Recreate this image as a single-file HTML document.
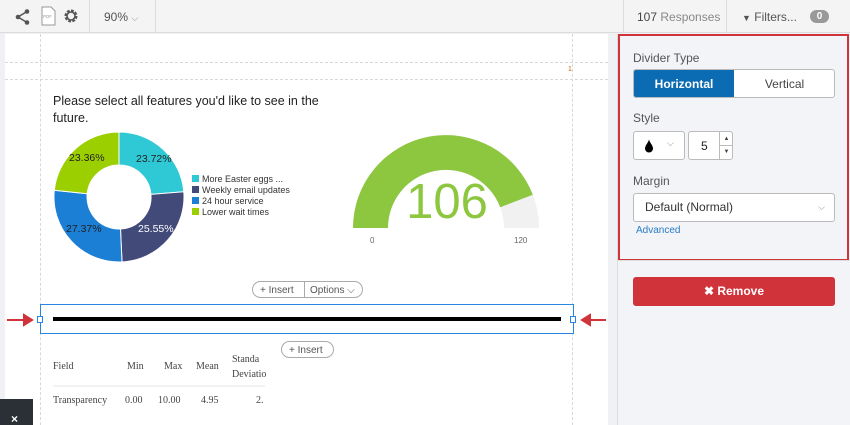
<!DOCTYPE html>
<html><head><meta charset="utf-8"><style>
*{box-sizing:border-box;margin:0;padding:0}
body{width:850px;height:425px;overflow:hidden;background:#f0f1f4;font-family:"Liberation Sans",sans-serif;position:relative}
.top{position:absolute;left:0;top:0;width:850px;height:33px;background:#f4f4f4;border-bottom:1px solid #dcdcdc}
.sep{position:absolute;top:0;width:1px;height:33px;background:#dcdcdc}
.canvas{position:absolute;left:5px;top:34px;width:603px;height:391px;background:#fff}
.dv{position:absolute;width:0;border-left:1px dashed #d8d8d8}
.dh{position:absolute;height:0;border-top:1px dashed #d8d8d8}
.panel{position:absolute;left:617px;top:34px;width:233px;height:391px;background:#f2f4f8;border-left:1px solid #dcdcdc}
.abs{position:absolute}
</style></head><body>
<div class="top">
  <svg class="abs" style="left:14px;top:8px" width="18" height="18" viewBox="0 0 18 18"><circle cx="13" cy="3.5" r="2.3" fill="#555"/><circle cx="4" cy="9" r="2.3" fill="#555"/><circle cx="13" cy="14.5" r="2.3" fill="#555"/><path d="M13 3.5L4 9L13 14.5" stroke="#555" stroke-width="1.5" fill="none"/></svg>
  <svg class="abs" style="left:41px;top:6px" width="15" height="20" viewBox="0 0 15 20"><path d="M1 1H10L14 5V19H1Z" fill="#fff" stroke="#999"/><text x="2" y="12" font-size="4.5" fill="#999" font-family="Liberation Sans">PDF</text></svg>
  <svg class="abs" style="left:63px;top:8px" width="16" height="16" viewBox="0 0 16 16"><circle cx="8" cy="8" r="5" fill="none" stroke="#555" stroke-width="3" stroke-dasharray="2.6 1.3"/><circle cx="8" cy="8" r="4" fill="none" stroke="#555" stroke-width="1.6"/></svg>
  <div class="sep" style="left:89px"></div>
  <div class="abs" style="left:104px;top:10px;font-size:12px;color:#555">90% <span style="font-size:9px;color:#888">⌵</span></div>
  <div class="sep" style="left:155px"></div>
  <div class="sep" style="left:623px"></div>
  <div class="abs" style="left:637px;top:10px;font-size:12px;color:#888"><span style="color:#444">107</span> Responses</div>
  <div class="sep" style="left:726px"></div>
  <div class="abs" style="left:742px;top:10px;font-size:12px;color:#555"><span style="font-size:9px">▼</span> Filters...</div>
  <div class="abs" style="left:810px;top:10px;width:19px;height:13px;border-radius:7px;background:#999;color:#fff;font-size:10px;text-align:center;line-height:13px;font-weight:bold">0</div>
</div>
<div class="canvas">
  <div class="dv" style="left:35px;top:0;height:391px"></div>
  <div class="dv" style="left:567px;top:0;height:391px"></div>
  <div class="dh" style="left:0;top:28px;width:603px"></div>
  <div class="dh" style="left:0;top:45px;width:603px"></div>
  <div class="abs" style="left:563px;top:32px;font-size:7px;color:#c60">1</div>
  <div class="abs" style="left:48px;top:59px;font-size:12.5px;line-height:17px;color:#222;width:270px">Please select all features you'd like to see in the future.</div>
</div>
<svg class="abs" style="left:0;top:0" width="610" height="425">
  <g stroke="#fff" stroke-width="1">
  <path d="M119 132A65 65 0 0 1 183.8 191.8L150.9 194.4A32 32 0 0 0 119 165Z" fill="#2ec9d5"/>
  <path d="M183.8 191.8A65 65 0 0 1 122 261.9L120.5 229A32 32 0 0 0 150.9 194.4Z" fill="#424a7a"/>
  <path d="M122 261.9A65 65 0 0 1 54.3 190.3L87.2 193.7A32 32 0 0 0 120.5 229Z" fill="#1b7fd5"/>
  <path d="M54.3 190.3A65 65 0 0 1 119 132L119 165A32 32 0 0 0 87.2 193.7Z" fill="#9ccf00"/>
  </g>
  <g font-family="Liberation Sans" font-size="10.5">
  <text x="136" y="162" fill="#222">23.72%</text>
  <text x="138" y="232" fill="#fff">25.55%</text>
  <text x="66" y="232" fill="#222">27.37%</text>
  <text x="69" y="161" fill="#222">23.36%</text>
  <rect x="192" y="175" width="7" height="7" fill="#2ec9d5"/><text x="202" y="182" font-size="9" fill="#333">More Easter eggs ...</text>
  <rect x="192" y="186" width="7" height="7" fill="#424a7a"/><text x="202" y="193" font-size="9" fill="#333">Weekly email updates</text>
  <rect x="192" y="197" width="7" height="7" fill="#1b7fd5"/><text x="202" y="204" font-size="9" fill="#333">24 hour service</text>
  <rect x="192" y="208" width="7" height="7" fill="#9ccf00"/><text x="202" y="215" font-size="9" fill="#333">Lower wait times</text>
  </g>
  <path d="M353 228A93 93 0 0 1 539 228L504 228A58 58 0 0 0 388 228Z" fill="#f1f1f1"/>
  <path d="M353 228A93 93 0 0 1 532.8 194.7L500.2 207.2A58 58 0 0 0 388 228Z" fill="#8dc63f"/>
  <text x="447" y="218" text-anchor="middle" font-family="Liberation Sans" font-size="49" fill="#8dc63f">106</text>
  <text x="370" y="243" font-family="Liberation Sans" font-size="8" fill="#666">0</text>
  <text x="514" y="243" font-family="Liberation Sans" font-size="8" fill="#666">120</text>
  <rect x="252.5" y="281.5" width="110" height="16" rx="8" fill="#fff" stroke="#aaa"/>
  <line x1="304.5" y1="282" x2="304.5" y2="297" stroke="#aaa"/>
  <text x="260" y="293" font-family="Liberation Sans" font-size="10" fill="#555">+  Insert</text>
  <text x="310" y="293" font-family="Liberation Sans" font-size="10" fill="#555">Options ⌵</text>
  <rect x="40.5" y="304.5" width="533" height="29" fill="#fff" stroke="#2a85e0"/>
  <rect x="53" y="317" width="508" height="4" fill="#000"/>
  <rect x="37.5" y="316.5" width="5" height="6" fill="#fff" stroke="#2a85e0"/>
  <rect x="570.5" y="316.5" width="5" height="6" fill="#fff" stroke="#2a85e0"/>
  <path d="M7 320H30M24 315L32 320L24 325Z" stroke="#d0343a" stroke-width="2" fill="#d0343a"/>
  <path d="M606 320H585M590 315L582 320L590 325Z" stroke="#d0343a" stroke-width="2" fill="#d0343a"/>
  <rect x="281.5" y="341.5" width="52" height="16" rx="8" fill="#fff" stroke="#aaa"/>
  <text x="289" y="353" font-family="Liberation Sans" font-size="10" fill="#555">+  Insert</text>
  <g font-family="Liberation Serif" font-size="10" fill="#444">
  <text x="53" y="369">Field</text><text x="127" y="369">Min</text><text x="164" y="369">Max</text><text x="196" y="369">Mean</text>
  <text x="232" y="362">Standa</text><text x="232" y="377">Deviatio</text>
  <text x="53" y="403">Transparency</text><text x="125" y="403">0.00</text><text x="158" y="403">10.00</text><text x="201" y="403">4.95</text><text x="256" y="403">2.</text>
  </g>
  <line x1="53" y1="386" x2="265" y2="386" stroke="#e5e5e5"/>
  <rect x="0" y="399" width="33" height="26" fill="#2b3036"/>
  <text x="11" y="423" font-family="Liberation Sans" font-size="12" font-weight="bold" fill="#fff">×</text>
</svg>
<div class="panel">
  <div class="abs" style="left:0;top:0;width:231px;height:227px;border:2px solid #d0343a"></div>
  <div class="abs" style="left:15px;top:17px;font-size:12px;color:#555">Divider Type</div>
  <div class="abs" style="left:15px;top:35px;width:202px;height:29px;border:1px solid #bbb;border-radius:3px;background:#fff;overflow:hidden">
    <div class="abs" style="left:0;top:0;width:100px;height:29px;background:#0b6bb3;color:#fff;font-size:12px;font-weight:bold;text-align:center;line-height:28px">Horizontal</div>
    <div class="abs" style="left:100px;top:0;width:101px;height:29px;color:#444;font-size:12px;text-align:center;line-height:28px">Vertical</div>
  </div>
  <div class="abs" style="left:15px;top:77px;font-size:12px;color:#555">Style</div>
  <div class="abs" style="left:15px;top:97px;width:52px;height:29px;border:1px solid #bbb;border-radius:3px;background:#fff">
    <svg class="abs" style="left:10px;top:7px" width="10" height="14" viewBox="0 0 10 14"><path d="M5 0C5 3 1 6 1 9.5A4 4 0 0 0 9 9.5C9 6 5 3 5 0Z" fill="#000"/></svg>
    <span class="abs" style="left:33px;top:6px;font-size:9px;color:#888">⌵</span>
  </div>
  <div class="abs" style="left:70px;top:97px;width:45px;height:29px;border:1px solid #bbb;border-radius:3px;background:#fff">
    <span class="abs" style="left:12px;top:7px;font-size:12px;color:#222">5</span>
    <div class="abs" style="left:30px;top:0;width:14px;height:27px;border-left:1px solid #bbb"><div style="border-bottom:1px solid #bbb;height:14px;font-size:6px;text-align:center;line-height:14px;color:#444">▲</div><div style="font-size:6px;text-align:center;line-height:12px;color:#444">▼</div></div>
  </div>
  <div class="abs" style="left:15px;top:140px;font-size:12px;color:#555">Margin</div>
  <div class="abs" style="left:15px;top:159px;width:202px;height:29px;border:1px solid #bbb;border-radius:3px;background:#fff;font-size:12px;color:#333;line-height:27px;padding-left:11px">Default (Normal)<span class="abs" style="right:9px;top:0;font-size:9px;color:#888">⌵</span></div>
  <div class="abs" style="left:18px;top:191px;font-size:10px;color:#2a7bc4">Advanced</div>
  <div class="abs" style="left:0;top:226px;width:233px;height:1px;background:#ddd"></div>
  <div class="abs" style="left:15px;top:243px;width:202px;height:29px;background:#d0343a;border-radius:3px;color:#fff;font-size:12px;font-weight:bold;text-align:center;line-height:29px">✖ Remove</div>
</div>
</body></html>
